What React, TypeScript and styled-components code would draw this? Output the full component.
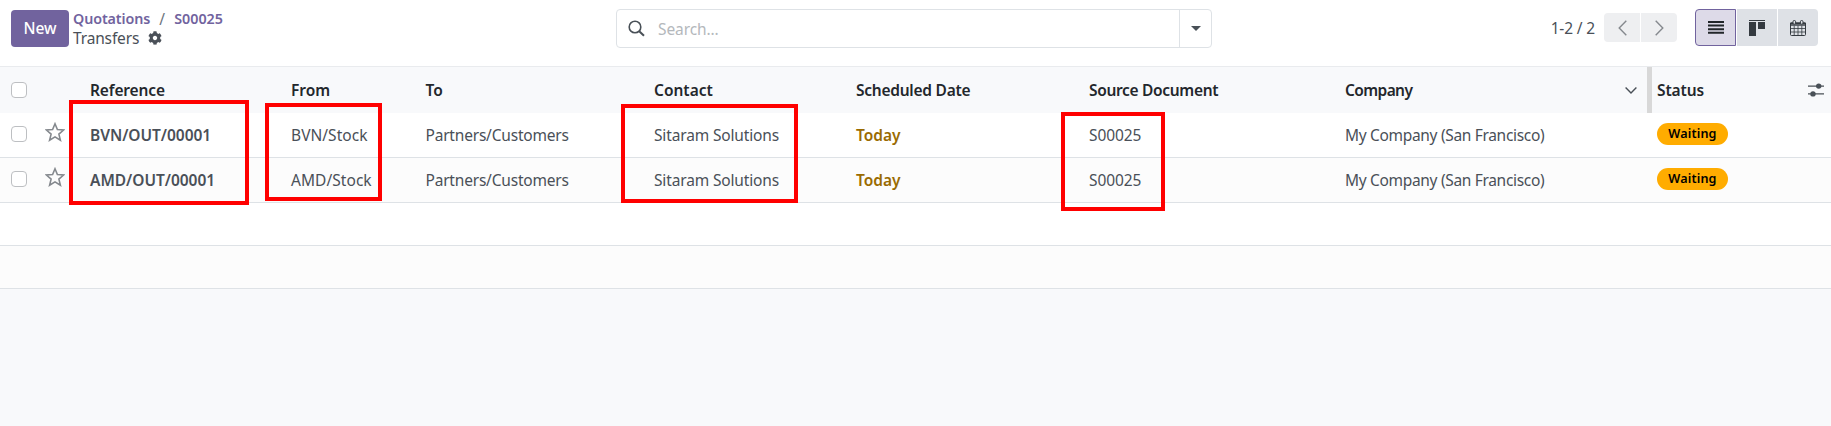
import React from 'react';
import styled, { createGlobalStyle } from 'styled-components';
import { FaCog } from 'react-icons/fa';

const Global = createGlobalStyle`
  *, *::before, *::after { box-sizing: border-box; }
  body {
    margin: 0;
    background: #f8f9fb;
    color: #4a5058;
    font: 400 15.5px/24px "Noto Sans", sans-serif;
  }
`;

const Screen = styled.div`
  position: relative;
  width: 1831px;
  height: 426px;
  overflow: hidden;
  background: #f8f9fb;
`;

const T = styled.span<{ $ls?: number }>`
  display: inline-block;
  white-space: nowrap;
  letter-spacing: ${p => p.$ls ?? 0}px;
`;

const ControlPanel = styled.header`
  display: grid;
  grid-template-columns: 616px 596px 1fr;
  height: 67px;
  padding-top: 9px;
  background: #fff;
  border-bottom: 1px solid #e9ebee;
`;

const Left = styled.div`
  display: flex;
  align-items: flex-start;
  padding: 1px 0 0 11px;
`;

const NewButton = styled.button`
  width: 58px;
  height: 37px;
  padding: 0;
  border: 0;
  border-radius: 4px;
  background: #71639e;
  color: #fff;
  font: 500 15.5px/37px "Noto Sans", sans-serif;
`;

const Crumbs = styled.div`
  padding-left: 4px;
`;

const CrumbRow = styled.div<{ $h: number }>`
  display: flex;
  align-items: center;
  height: ${p => p.$h}px;
  line-height: ${p => p.$h}px;
`;

const CrumbLink = styled.a`
  color: #71639e;
  font-size: 14.3px;
  font-weight: 600;
`;

const Slash = styled.span`
  width: 24px;
  text-align: center;
  color: #6c757d;
`;

const Gear = styled(FaCog)`
  margin-left: 9px;
  font-size: 14px;
`;

const SearchBox = styled.div`
  display: flex;
  height: 39px;
  border: 1px solid #dee2e6;
  border-radius: 4px;
`;

const SearchInput = styled.div`
  flex: 1;
  display: flex;
  align-items: center;
  padding-left: 11px;
  gap: 13px;
  color: #b4b8bc;
`;

const SearchToggle = styled.div`
  display: flex;
  align-items: center;
  justify-content: center;
  width: 32px;
  border-left: 1px solid #dee2e6;
`;

const Right = styled.div`
  display: flex;
  align-items: flex-start;
  justify-content: flex-end;
  padding-right: 13px;
`;

const Range = styled.span`
  margin: 7px 9px 0 0;
`;

const Pager = styled.div`
  display: flex;
  gap: 1px;
  margin: 4px 18px 0 0;
`;

const PagerButton = styled.div<{ $end?: boolean }>`
  display: flex;
  align-items: center;
  justify-content: center;
  width: 36px;
  height: 29px;
  background: #eeeff1;
  border-radius: ${p => (p.$end ? '0 4px 4px 0' : '4px 0 0 4px')};
`;

const Views = styled.div`
  display: flex;
  gap: 1px;
`;

const ViewButton = styled.div<{ $active?: boolean; $last?: boolean }>`
  display: flex;
  align-items: center;
  justify-content: center;
  width: ${p => (p.$active ? 41 : 40)}px;
  height: 37px;
  background: ${p => (p.$active ? '#dddae8' : '#dee1e6')};
  border: ${p => (p.$active ? '1px solid #71639e' : '0')};
  border-radius: ${p => (p.$active ? '4px 0 0 4px' : p.$last ? '0 4px 4px 0' : '0')};
`;

const Row = styled.div<{ $kind?: 'head' | 'alt' | 'empty' | 'emptyAlt' }>`
  display: grid;
  grid-template-columns: 45px 45px 201px 134.5px 228.5px 202px 233px 256px 312px 1fr;
  align-items: center;
  height: ${p => (p.$kind === 'head' ? 46 : p.$kind?.startsWith('empty') ? 43 : 45)}px;
  background: ${p => (p.$kind === 'head' ? '#f8f9fb' : p.$kind === 'alt' || p.$kind === 'emptyAlt' ? '#fcfcfc' : '#fff')};
  border-bottom: ${p => (p.$kind === 'head' ? '0' : '1px solid #dee2e6')};
  ${p => p.$kind === 'head' && 'color: #23272c; font-weight: 600;'}
`;

const Check = styled.span<{ $record?: boolean }>`
  width: 16px;
  height: 16px;
  margin: ${p => (p.$record ? '-2px' : '0')} 0 0 11px;
  border: 1px solid #bdbfc2;
  border-radius: 4px;
  background: #fff;
`;

const Strong = styled.span`
  font-weight: 600;
`;

const Today = styled.span`
  color: #9a6b01;
  font-weight: 600;
`;

const CompanyHead = styled.div`
  display: flex;
  align-items: center;
  justify-content: space-between;
  height: 46px;
  padding-right: 5px;
`;

const Resizer = styled.span`
  width: 5px;
  height: 46px;
  margin-left: 10px;
  background: #d8d8d8;
`;

const HeadTools = styled.span`
  display: flex;
  align-items: center;
`;

const StatusHead = styled.div`
  display: flex;
  align-items: center;
  justify-content: space-between;
  padding-right: 7px;
`;

const Badge = styled.span`
  display: flex;
  align-items: center;
  justify-content: center;
  width: 71px;
  height: 22px;
  margin-top: -2px;
  border-radius: 11px;
  background: #ffac00;
  color: #000;
  font-size: 12.6px;
  font-weight: 600;
`;

const StarIcon = styled.svg`
  margin-top: -6px;
`;

const Mark = styled.div<{ $x: number; $y: number; $w: number; $h: number }>`
  position: absolute;
  left: ${p => p.$x}px;
  top: ${p => p.$y}px;
  width: ${p => p.$w}px;
  height: ${p => p.$h}px;
  border: 4px solid #f00;
`;

const records = [
  { ref: 'BVN/OUT/00001', from: 'BVN/Stock' },
  { ref: 'AMD/OUT/00001', from: 'AMD/Stock' },
];

export default function App() {
  return (
    <Screen>
      <Global />
      <ControlPanel>
        <Left>
          <NewButton><T>New</T></NewButton>
          <Crumbs>
            <CrumbRow $h={18}>
              <CrumbLink><T $ls={-0.1}>Quotations</T></CrumbLink>
              <Slash>/</Slash>
              <CrumbLink><T>S00025</T></CrumbLink>
            </CrumbRow>
            <CrumbRow $h={20}><T $ls={-0.15}>Transfers</T><Gear /></CrumbRow>
          </Crumbs>
        </Left>
        <SearchBox>
          <SearchInput>
            <svg width="17" height="17" viewBox="0 0 17 17" fill="none" stroke="#495057">
              <circle cx="7" cy="7" r="5.8" strokeWidth="1.6" />
              <path d="M11.2 11.2 16 15.8" strokeWidth="2" />
            </svg>
            <T $ls={-0.1}>Search...</T>
          </SearchInput>
          <SearchToggle>
            <svg width="10" height="5" viewBox="0 0 10 5"><path d="M0 0h10L5 5z" fill="#495057" /></svg>
          </SearchToggle>
        </SearchBox>
        <Right>
          <Range><T $ls={-0.15}>1-2 / 2</T></Range>
          <Pager>
            <PagerButton>
              <svg width="9" height="16" viewBox="0 0 9 16" fill="none" stroke="#85898e" strokeWidth="1.4"><path d="M8.3.8 1.2 8l7.1 7.2" /></svg>
            </PagerButton>
            <PagerButton $end>
              <svg width="9" height="16" viewBox="0 0 9 16" fill="none" stroke="#85898e" strokeWidth="1.4"><path d="M.7.8 7.8 8 .7 15.2" /></svg>
            </PagerButton>
          </Pager>
          <Views>
            <ViewButton $active>
              <svg width="16" height="13" viewBox="0 0 16 13" fill="#212529"><path d="M0 0h16v2H0zM0 3.6h16v2H0zM0 7.2h16v2H0zM0 10.8h16v2H0z" /></svg>
            </ViewButton>
            <ViewButton>
              <svg width="16" height="16" viewBox="0 0 16 16" fill="#343a40"><path d="M0 0h16v1H0zM0 2h7v14H0zM9 2h7v7H9z" /></svg>
            </ViewButton>
            <ViewButton $last>
              <svg width="16" height="16" viewBox="0 0 16 16" fill="none" stroke="#343a40">
                <path d="M.5 3v11.5q0 1 1 1h13q1 0 1-1V3" />
                <path d="M.5 3.500h15" strokeWidth="2.500" />
                <path d="M.5 8.500h15M.5 12h15M4.200 5.500v10M8 5.500v10M11.800 5.500v10" strokeWidth=".8" />
                <path d="M.5 5.500h15" strokeWidth=".7" />
                <rect x="3" y=".5" width="2.600" height="3.700" rx="1.200" fill="#dee1e6" />
                <rect x="10.400" y=".5" width="2.600" height="3.700" rx="1.200" fill="#dee1e6" />
              </svg>
            </ViewButton>
          </Views>
        </Right>
      </ControlPanel>
      <Row $kind="head">
        <Check />
        <span />
        <T $ls={-0.13}>Reference</T>
        <T>From</T>
        <T>To</T>
        <T>Contact</T>
        <T $ls={-0.25}>Scheduled Date</T>
        <T $ls={-0.32}>Source Document</T>
        <CompanyHead>
          <T $ls={-0.6}>Company</T>
          <HeadTools>
            <svg width="12" height="7" viewBox="0 0 12 7" fill="none" stroke="#495057" strokeWidth="1.4"><path d="M.6.6 6 6 11.400.6" /></svg>
            <Resizer />
          </HeadTools>
        </CompanyHead>
        <StatusHead>
          <T $ls={-0.1}>Status</T>
          <svg width="16" height="14" viewBox="0 0 16 14" fill="#495057"><path d="M0 2.500h16v1.200H0zM0 10.300h16v1.200H0z" /><circle cx="10.700" cy="3.100" r="2.700" /><circle cx="5" cy="10.900" r="2.700" /></svg>
        </StatusHead>
      </Row>
      {records.map((r, i) => (
        <Row key={r.ref} $kind={i ? 'alt' : undefined}>
          <Check $record />
          <StarIcon width="20" height="20" viewBox="0 0 20 20" fill="none" stroke="#85898e" strokeWidth="1.6">
            <path d="M10 1.800 12.400 7.500 18.600 8 13.900 12.100 15.400 18.200 10 14.900 4.600 18.200 6.100 12.100 1.400 8 7.600 7.500z" />
          </StarIcon>
          <Strong><T $ls={-0.03}>{r.ref}</T></Strong>
          <T $ls={0.05}>{r.from}</T>
          <T $ls={-0.2}>Partners/Customers</T>
          <T $ls={-0.15}>Sitaram Solutions</T>
          <Today><T>Today</T></Today>
          <T $ls={-0.1}>S00025</T>
          <T $ls={-0.32}>My Company (San Francisco)</T>
          <Badge><T $ls={0.15}>Waiting</T></Badge>
        </Row>
      ))}
      <Row $kind="empty" />
      <Row $kind="emptyAlt" />
      <Mark $x={69} $y={100} $w={180} $h={105} />
      <Mark $x={265} $y={103} $w={117} $h={98} />
      <Mark $x={621} $y={104} $w={177} $h={99} />
      <Mark $x={1061} $y={112} $w={104} $h={99} />
    </Screen>
  );
}
